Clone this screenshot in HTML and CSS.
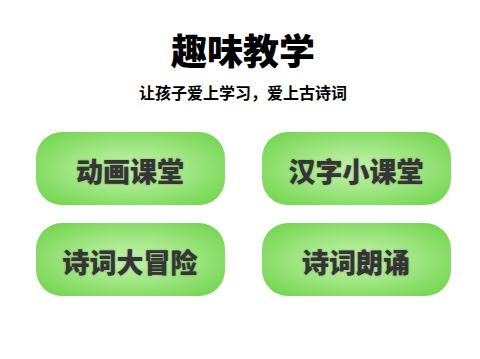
FILE: index.html
```html
<!DOCTYPE html>
<html lang="zh">
<head>
<meta charset="utf-8">
<link rel="stylesheet" href="styles.css">
</head>
<body>
<main class="page">
  <h1 class="title">趣味教学</h1>
  <p class="subtitle">让孩子爱上学习，爱上古诗词</p>
  <div class="grid">
    <div class="btn">动画课堂</div>
    <div class="btn">汉字小课堂</div>
    <div class="btn">诗词大冒险</div>
    <div class="btn">诗词朗诵</div>
  </div>
</main>
</body>
</html>
```
FILE: styles.css
```css
* { box-sizing: border-box; }
html, body { margin: 0; padding: 0; background: #fff; }
body {
  width: 480px;
  height: 359px;
  font-family: "Noto Sans CJK SC", "Noto Sans", sans-serif;
  color: #000;
}
.page {
  display: flex;
  flex-direction: column;
  align-items: center;
  padding-top: 27px;
  padding-left: 6px;
}
.title {
  margin: 0;
  font-size: 36px;
  font-weight: 900;
  line-height: 44px;
}
.subtitle {
  margin: 10px 0 0;
  font-size: 16px;
  font-weight: 700;
  line-height: 22px;
}
.grid {
  margin-top: 29px;
  display: grid;
  grid-template-columns: 189px 189px;
  column-gap: 37px;
  row-gap: 18px;
}
.btn {
  height: 73px;
  border-radius: 26px;
  background: radial-gradient(ellipse at center, #c2f2ab 0%, #a8e98c 35%, #6bd246 100%);
  display: flex;
  align-items: center;
  justify-content: center;
  font-size: 27px;
  font-weight: 900;
  color: #353535;
  padding-top: 3px;
  text-shadow: 0 0 2px rgba(0,0,0,0.35);
}
```
